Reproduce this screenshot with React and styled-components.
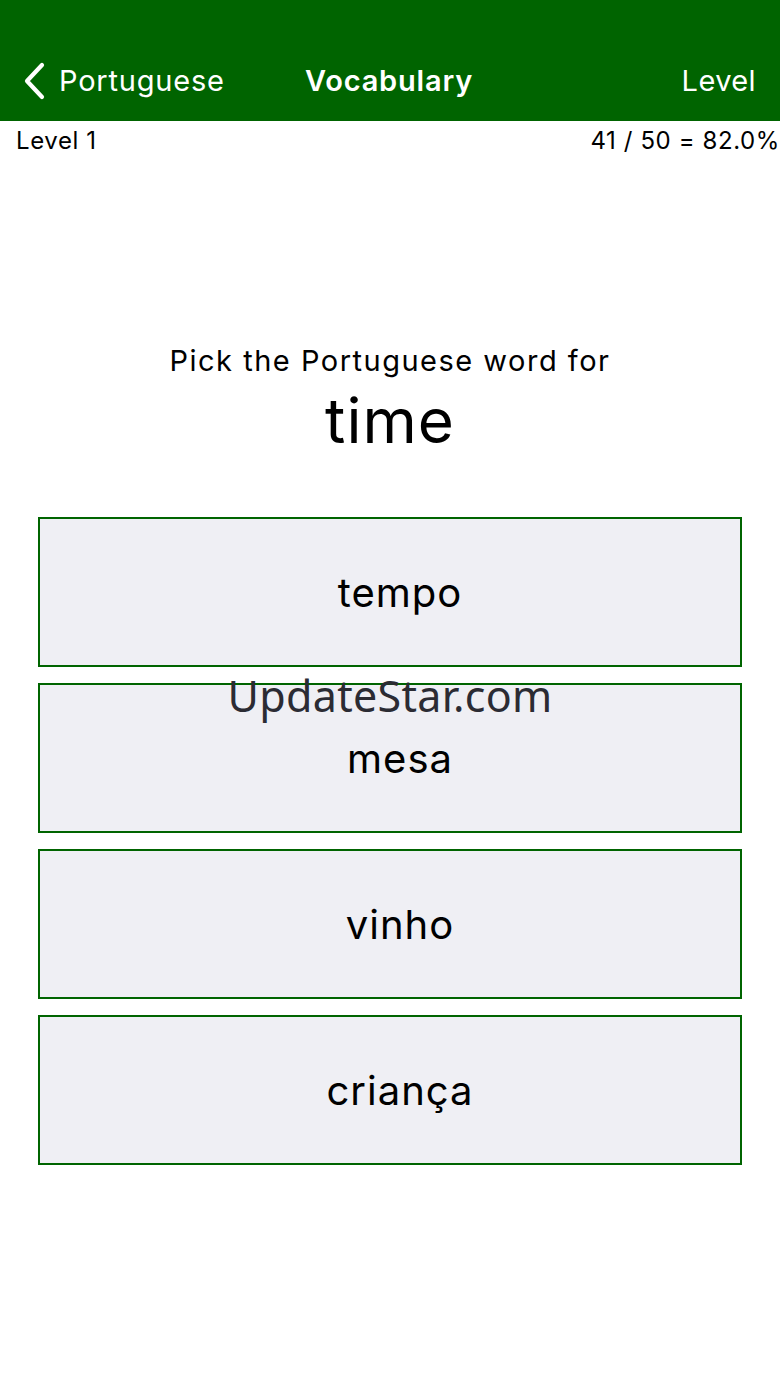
import styled, { createGlobalStyle } from "styled-components"

const GlobalStyle = createGlobalStyle`
    html, body {
        margin: 0;
        padding: 0;
        background: #ffffff;
    }
    body {
        font-family: Inter, "Liberation Sans", sans-serif;
        color: #000;
    }
`

const green = "#006400"

const Screen = styled.div`
    position: relative;
    width: 780px;
    height: 1387px;
    overflow: hidden;
    background: #fff;
`

const Header = styled.header`
    background: ${green};
    height: 121px;
    padding-top: 40px;
    box-sizing: border-box;
`

const NavBar = styled.nav`
    height: 81px;
    display: grid;
    grid-template-columns: 1fr auto 1fr;
    align-items: center;
    color: #fff;
    padding: 0 24px 0 22px;
`

const BackButton = styled.div`
    display: flex;
    align-items: center;
    gap: 13px;
    font-size: 29px;
    letter-spacing: 0.8px;
`

const Title = styled.div`
    font-size: 29px;
    font-weight: 600;
    letter-spacing: 0.8px;
`

const NavAction = styled.div`
    justify-self: end;
    font-size: 29px;
    letter-spacing: 0.4px;
`

const StatusRow = styled.div`
    display: flex;
    justify-content: space-between;
    align-items: center;
    height: 38px;
    padding-left: 16px;
    font-size: 24px;
    letter-spacing: 0.6px;
    white-space: nowrap;
`

const Prompt = styled.section`
    display: flex;
    flex-direction: column;
    align-items: center;
    margin-top: 182px;
`

const Question = styled.div`
    font-size: 29px;
    line-height: 40px;
    letter-spacing: 1.5px;
`

const Word = styled.div`
    font-size: 62px;
    line-height: 80px;
    letter-spacing: 1px;
`

const Choices = styled.div`
    display: flex;
    flex-direction: column;
    gap: 16px;
    margin: 56px 38px 0;
`

const Choice = styled.button`
    height: 150px;
    box-sizing: border-box;
    border: 2px solid ${green};
    border-radius: 0;
    background: #efeff4;
    font-family: inherit;
    font-size: 40px;
    letter-spacing: 1px;
    color: #000;
    padding: 0 0 0 20px;
    display: flex;
    align-items: center;
    justify-content: center;
`

const Watermark = styled.div`
    position: absolute;
    top: 666px;
    left: 0;
    right: 0;
    text-align: center;
    font-family: "Noto Sans", "Open Sans", sans-serif;
    font-size: 43px;
    letter-spacing: 0.3px;
    color: #2b2b33;
    pointer-events: none;
`

function Chevron() {
    return (
        <svg width="24" height="38" viewBox="0 0 24 38">
            <path d="M20 3 L5 19 L20 35" fill="none" stroke="#fff" strokeWidth="4.2" strokeLinecap="round" strokeLinejoin="round" />
        </svg>
    )
}

const answers = ["tempo", "mesa", "vinho", "criança"]

export default function App() {
    return (
        <Screen>
            <GlobalStyle />
            <Header>
                <NavBar>
                    <BackButton>
                        <Chevron />
                        Portuguese
                    </BackButton>
                    <Title>Vocabulary</Title>
                    <NavAction>Level</NavAction>
                </NavBar>
            </Header>
            <StatusRow>
                <span>Level 1</span>
                <span>41 / 50 = 82.0%</span>
            </StatusRow>
            <Prompt>
                <Question>Pick the Portuguese word for</Question>
                <Word>time</Word>
            </Prompt>
            <Choices>
                {answers.map((a) => (
                    <Choice key={a}>{a}</Choice>
                ))}
            </Choices>
            <Watermark>UpdateStar.com</Watermark>
        </Screen>
    )
}
